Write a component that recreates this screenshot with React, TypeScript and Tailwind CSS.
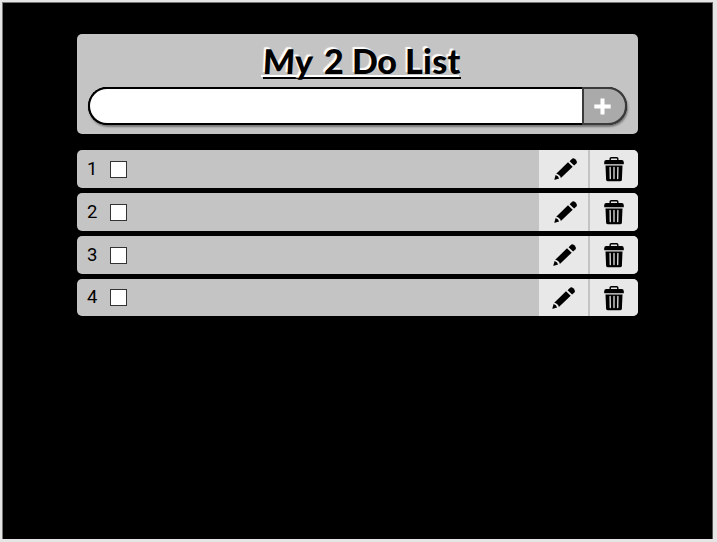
import React from "react";

function Pencil() {
  return (
    <svg width="24" height="24" viewBox="0 0 24 24" fill="#000" aria-hidden="true">
      <path d="M0.4 22.2 L1.6 18.1 Q4.4 18.8 5.1 21.4 L1 22.8 Q.1 23 .4 22.2Z" />
      <path d="M2.2 16.8 L14 5.3 L18.7 9.7 L6.9 20.9 Q5.9 17.6 2.2 16.8Z" />
      <path d="M15.6 4.2 L17.8 1.9 Q19.3.6 21.3 2.2 L22.5 3.8 Q23.6 5.4 22.4 6.5 L20.1 8.6Z" />
    </svg>
  );
}

function Trash() {
  return (
    <svg width="20" height="26" viewBox="0 0 20 26" aria-hidden="true">
      <path d="M6.2 4.3 V2.8 Q6.2 1.7 7.3 1.7 H12.7 Q13.8 1.7 13.8 2.8 V4.3" fill="none" stroke="#000" strokeWidth="1.4" />
      <path d="M2.3 4 H17.7 Q19.8 4 19.8 6.4 V8.2 H.2 V6.4 Q.2 4 2.3 4Z" />
      <path d="M1.5 9.5 H18.5 L17.9 23.7 Q17.7 25.3 16 25.3 H4 Q2.3 25.3 2.1 23.7Z" />
      <path d="M6.1 11.4 L6.3 22.6 M10 11.4 V22.6 M13.9 11.4 L13.7 22.6" stroke="#e6e6e6" strokeWidth="1.3" strokeLinecap="round" />
    </svg>
  );
}

const rows = [
  { n: 1, size: "h-[38px] mb-[5px]", shift: "pl-[15px]" },
  { n: 2, size: "h-[38px] mb-[5px]", shift: "pl-[15px]" },
  { n: 3, size: "h-[38px] mb-[5px]", shift: "pl-[14px]" },
  { n: 4, size: "h-[37px]", shift: "pl-[13px]" },
];

export default function App() {
  return (
    <div className="h-[542px] w-[717px] bg-[#e5e5e5] pt-[2px] pr-[4px] pb-[3px] pl-[2px] font-['Roboto',sans-serif]">
      <main className="h-full border-t border-r border-l border-t-[#777] border-r-[#555] border-l-[#777] bg-black pt-[31px] pl-[74px]">
        <header className="h-[100px] w-[561px] rounded-[5px] bg-[#c4c4c4] pt-[6px] pl-[11px]">
          <div className="ml-[173px] w-[200px]">
            <h1 className="relative z-10 flex h-[35px] pl-[2px] font-['Lato',sans-serif] text-[34px] leading-[42px] font-black whitespace-nowrap [text-shadow:-2px_-2px_1px_#fff]">
              <span className="w-[61px] -skew-x-3">My </span>
              <span className="w-[28px]">2 </span>
              <span className="w-[53px] -tracking-[0.5px]">Do </span>
              <span className="tracking-[0.3px]">List</span>
            </h1>
            <div className="mr-[2px] h-[2px] bg-white" />
            <div className="ml-[2px] h-[2px] bg-black" />
          </div>
          <form className="mt-[8px] flex h-[38px] w-[539px] rounded-full bg-black shadow-[1px_2px_2px_#777]">
            <input aria-label="New task" className="min-w-0 flex-1 rounded-l-full border-y-2 border-l-2 border-black bg-white outline-none" />
            <button type="button" aria-label="Add" className="flex w-[45px] items-center rounded-r-full border-2 border-[#3b3b3b] bg-[#aaa] pl-[10px]">
              <svg width="17" height="17" viewBox="0 0 17 17" aria-hidden="true">
                <path d="M8.5 .5V16.5M.3 8.5H16.7" stroke="#fff" strokeWidth="4" />
              </svg>
            </button>
          </form>
        </header>
        <ul className="mt-4 w-[561px]">
          {rows.map((r) => (
            <li key={r.n} className={`flex overflow-hidden rounded-[5px] bg-[#c4c4c4] ${r.size}`}>
              <div className="flex flex-1 items-center pl-[10px] text-[18.5px]">
                <span className="w-[23px] pt-px">{r.n}</span>
                <span className="h-[17px] w-[17px] border border-[#333] bg-white" />
              </div>
              <div className={`flex w-[49px] items-center bg-[#e8e8e8] ${r.shift}`}><Pencil /></div>
              <div className="flex w-[50px] items-center border-l-2 border-[#c4c4c4] bg-[#e8e8e8] pl-[14px]"><Trash /></div>
            </li>
          ))}
        </ul>
      </main>
    </div>
  );
}
